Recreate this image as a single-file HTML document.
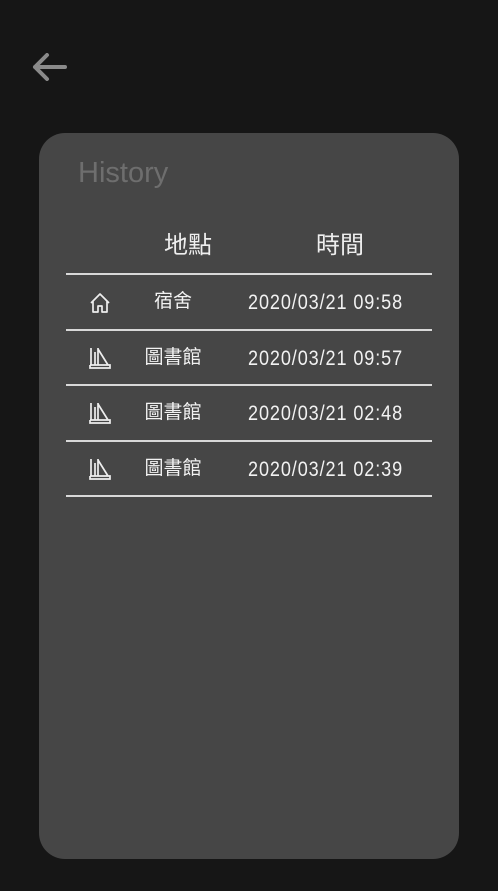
<!DOCTYPE html>
<html><head><meta charset="utf-8"><style>
body{margin:0;width:498px;height:891px;background:#161616;position:relative;overflow:hidden;font-family:"Liberation Sans","Noto Sans CJK TC",sans-serif;}
.card{position:absolute;left:39px;top:133px;width:420px;height:726px;background:#464646;border-radius:26px;}
.t{position:absolute;color:#eee;white-space:nowrap;}
.line{position:absolute;left:66px;width:366px;height:2px;background:#d8d8d8;}
.d{position:absolute;left:248px;color:#f2f2f2;font-size:21px;letter-spacing:1.05px;transform:scaleX(0.86);transform-origin:left center;white-space:nowrap;line-height:24px;}
.n{position:absolute;color:#f2f2f2;font-size:19px;width:80px;text-align:center;left:133px;line-height:24px;}
.i{position:absolute;left:88px;}
</style></head><body>
<svg style="position:absolute;left:32px;top:53px" width="36" height="28" viewBox="0 0 36 28"><path d="M3 14H33M15 2L3 14L15 26" stroke="#8a8a8a" stroke-width="4" fill="none" stroke-linecap="round" stroke-linejoin="round"/></svg>
<div class="card"></div>
<div class="t" style="left:78px;top:157px;font-size:29px;color:#6e6e6e;">History</div>
<div class="t" style="left:164px;top:225px;font-size:24px;">地點</div>
<div class="t" style="left:316px;top:225px;font-size:24px;">時間</div>
<div class="line" style="top:273px"></div>
<div class="line" style="top:329px"></div>
<div class="line" style="top:384px"></div>
<div class="line" style="top:440px"></div>
<div class="line" style="top:495px"></div>

<svg class="i" style="top:291px" width="24" height="24" viewBox="0 0 24 24"><path d="M3 12L12 3L21 12M5 10V21H10V15H14V21H19V10" stroke="#eee" stroke-width="1.7" fill="none" stroke-linejoin="round"/></svg>
<div class="n" style="top:290px">宿舍</div>
<div class="d" style="top:291px">2020/03/21 09:58</div>

<div class="n" style="top:346px">圖書館</div>
<div class="d" style="top:347px">2020/03/21 09:57</div>
<div class="n" style="top:401px">圖書館</div>
<div class="d" style="top:402px">2020/03/21 02:48</div>
<div class="n" style="top:457px">圖書館</div>
<div class="d" style="top:458px">2020/03/21 02:39</div>

<svg class="i" style="top:345px" width="24" height="24" viewBox="0 0 24 24"><path d="M2 20H22V23H2V20M3 3V20M7 7V20M10 3V20M10 4L20 20" stroke="#eee" stroke-width="1.7" fill="none"/></svg>
<svg class="i" style="top:400px" width="24" height="24" viewBox="0 0 24 24"><path d="M2 20H22V23H2V20M3 3V20M7 7V20M10 3V20M10 4L20 20" stroke="#eee" stroke-width="1.7" fill="none"/></svg>
<svg class="i" style="top:456px" width="24" height="24" viewBox="0 0 24 24"><path d="M2 20H22V23H2V20M3 3V20M7 7V20M10 3V20M10 4L20 20" stroke="#eee" stroke-width="1.7" fill="none"/></svg>
</body></html>
